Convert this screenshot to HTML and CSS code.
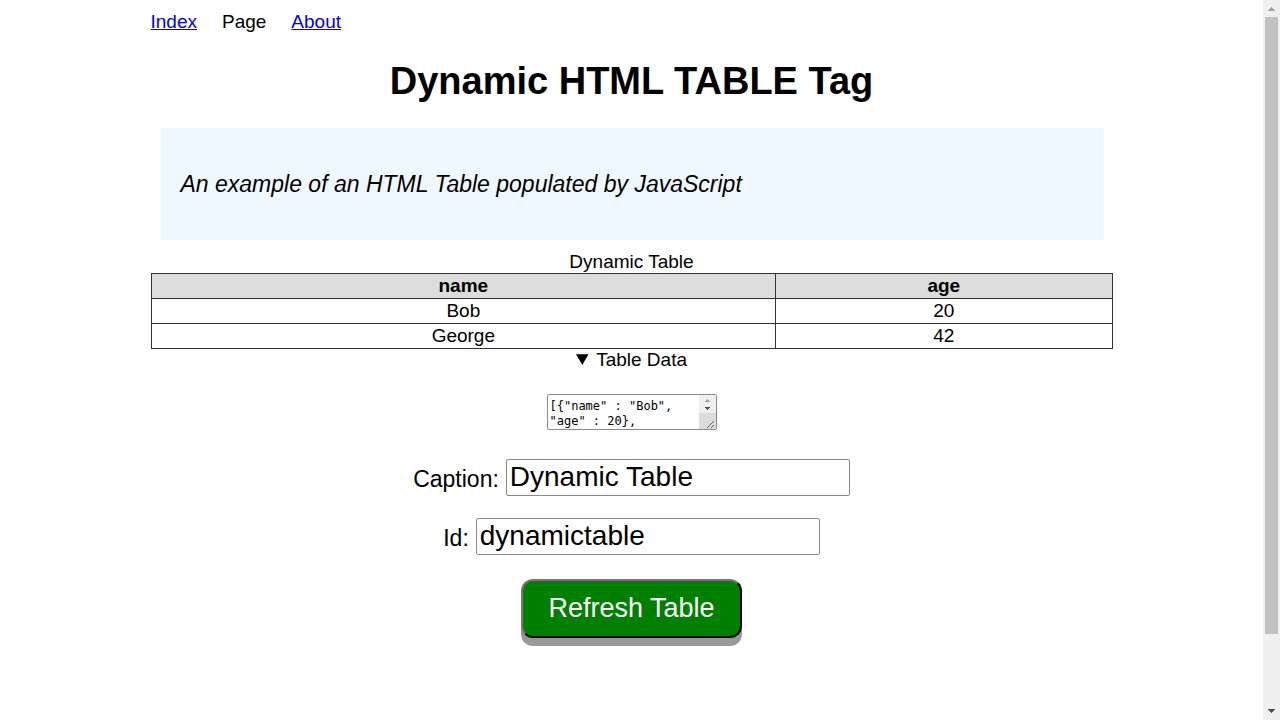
FILE: index.html
```html
<!DOCTYPE html>
<html lang="en">
<head>
<meta charset="utf-8">
<title>Dynamic HTML TABLE Tag</title>
<link rel="stylesheet" href="styles.css">
</head>
<body>
<div class="content">
  <nav class="nav">
    <a href="#index">Index</a>
    <span>Page</span>
    <a href="#about">About</a>
  </nav>
  <main class="main">
    <h1 class="title">Dynamic HTML TABLE Tag</h1>
    <p class="lead">An example of an HTML Table populated by JavaScript</p>
    <table class="table" id="dynamictable">
      <caption>Dynamic Table</caption>
      <thead><tr><th class="col-name">name</th><th>age</th></tr></thead>
      <tbody>
        <tr><td>Bob</td><td>20</td></tr>
        <tr><td>George</td><td>42</td></tr>
      </tbody>
    </table>
    <details class="details" open>
      <summary>Table Data</summary>
      <div class="data">
        <textarea class="data-text" aria-label="Table Data">[{"name" : "Bob", "age" : 20},
{"name" : "George", "age" : 42}]</textarea>
        <svg class="data-scroll" width="17" height="34" viewBox="0 0 17 34" aria-hidden="true">
          <path fill="#f0f0f0" d="M0 0h17v18H0z"/>
          <path fill="#dcdcdc" d="M0 18h17v16H0z"/>
          <path fill="#a3a3a3" d="M6 7h5v-1h-1v-1H9v-1H8v1H7v1H6z"/>
          <path fill="#505050" d="M6 12h5v1h-1v1H9v1H8v-1H7v-1H6z"/>
          <path stroke="#606060" d="M8 33l7-7M12 33l3-3"/>
        </svg>
      </div>
    </details>
    <form class="form">
      <div class="field">
        <label for="caption">Caption:</label>
        <input id="caption" type="text" value="Dynamic Table">
      </div>
      <div class="field">
        <label for="id">Id:</label>
        <input id="id" type="text" value="dynamictable">
      </div>
      <button class="refresh" type="button">Refresh Table</button>
    </form>
  </main>
</div>
<div class="scrollbar" aria-hidden="true">
  <svg width="17" height="17" viewBox="0 0 17 17"><path fill="#a3a3a3" d="M5 11h7v-1h-1v-1h-1v-1H9v-1H8v1H7v1H6v1H5z"/></svg>
  <div class="track"><div class="thumb"></div></div>
  <svg width="17" height="17" viewBox="0 0 17 17"><path fill="#505050" d="M5 6h7v1h-1v1h-1v1H9v1H8V9H7V8H6V7H5z"/></svg>
</div>
</body>
</html>
```
FILE: styles.css
```css
* { box-sizing: border-box; }

body {
  margin: 0;
  min-height: 100vh;
  display: flex;
  background: #fff;
  color: #000;
  font-family: "Liberation Sans", Arial, sans-serif;
  font-size: 19px;
  line-height: 22px;
}

.content {
  flex: 1;
  max-width: 962px;
  margin: 0 auto;
  padding: 11px 0;
}

.nav { display: flex; gap: 25px; }
.nav a { color: #00e; }

.main { text-align: center; }

.title {
  margin: 26px 0 25px;
  font-size: 38px;
  line-height: 44px;
}

.lead {
  margin: 0 10px 10px;
  padding: 42px 20px;
  background: #f0f8ff;
  font-size: 23px;
  line-height: 28px;
  font-style: italic;
  text-align: left;
}

.table {
  width: 100%;
  border-collapse: collapse;
}
.table caption { padding-top: 1px; }
.table th,
.table td {
  padding: 1px;
  border: 1px solid #333;
}
.table th { background: #dcdcdc; }
.table .col-name { width: 65%; }

.data {
  position: relative;
  width: 170px;
  margin: 23px auto 0;
}
.data-text {
  display: block;
  width: 100%;
  height: 36px;
  padding: 4px 20px 0 2px;
  border: 1px solid #8a8a8a;
  border-radius: 2px;
  overflow: hidden;
  resize: none;
  font-family: "DejaVu Sans Mono", monospace;
  font-size: 12px;
  line-height: 15px;
}
.data-scroll {
  position: absolute;
  top: 1px;
  right: 1px;
}

.form {
  display: flex;
  flex-direction: column;
  align-items: center;
  gap: 22px;
  margin-top: 29px;
}
.field {
  display: flex;
  align-items: center;
  gap: 7px;
  font-size: 23px;
}
.field label { padding-top: 2px; }
.field input {
  width: 344px;
  height: 37px;
  padding: 0 3px 1px;
  border: 1px solid #8a8a8a;
  border-radius: 2px;
  font-family: inherit;
  font-size: 28px;
}

.refresh {
  margin-top: 2px;
  padding: 12px 25px;
  border: 2px outset #222;
  border-radius: 12px;
  background: #008000;
  box-shadow: 0 8px #999;
  color: #fff;
  font-family: inherit;
  font-size: 27px;
  line-height: 31px;
}

.scrollbar {
  position: sticky;
  top: 0;
  display: flex;
  flex-direction: column;
  width: 17px;
  height: 100vh;
  background: #f0f0f0;
}
.track { flex: 1; padding: 0 2px; }
.thumb { height: 90%; background: #c1c1c1; }
```
